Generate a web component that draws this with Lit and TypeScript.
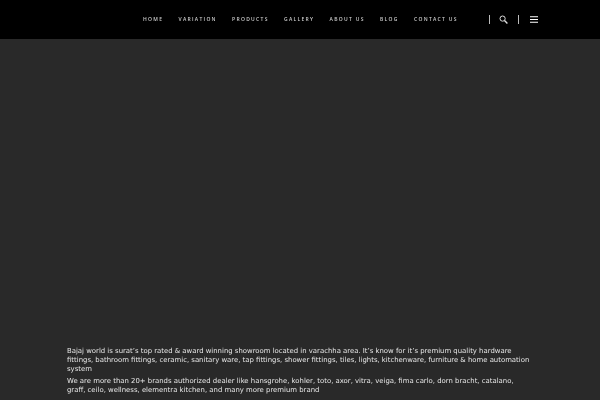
import { LitElement, html, css } from "lit";
import { customElement } from "lit/decorators.js";

const NAV = ["HOME", "VARIATION", "PRODUCTS", "GALLERY", "ABOUT US", "BLOG", "CONTACT US"];

@customElement("app-root")
export class AppRoot extends LitElement {
  static styles = css`
    :host { display: block; width: 600px; height: 400px; overflow: hidden; background: #292929; }
    .bar { height: 39px; background: #000; display: flex; align-items: center; padding-left: 143px; }
    .nav { display: flex; gap: 15.2px; width: 346px; font: 600 5px/1 "Open Sans", sans-serif; letter-spacing: 1.3px; color: #ccc; white-space: nowrap; filter: blur(0.2px); }
    .tools { display: flex; align-items: center; }
    .sep { width: 1px; height: 9px; background: #bbb; }
    .search { width: 28px; padding-right: 2px; box-sizing: border-box; display: flex; justify-content: center; }
    svg { display: block; }
    .menu { margin-left: 11px; }
    .copy { width: 466px; padding: 308px 0 0 67px; font: 6.9px/8.8px "DejaVu Sans", sans-serif; color: #e6e6e6; display: flex; flex-direction: column; gap: 4px; filter: blur(0.2px); }
    p { margin: 0; }
  `;
  render() {
    return html`
      <div class="bar">
        <div class="nav">${NAV.map((n) => html`<span>${n}</span>`)}</div>
        <div class="tools">
          <span class="sep"></span>
          <span class="search"><svg width="9" height="9" viewBox="0 0 9 9" fill="none" stroke="#ddd"><circle cx="3.6" cy="3.6" r="2.6" stroke-width="1"/><path d="M5.5 5.5L8.4 8.4" stroke-width="1.4"/></svg></span>
          <span class="sep"></span>
          <svg class="menu" width="8" height="7" viewBox="0 0 8 7" fill="none" stroke="#fff" stroke-width="1.1"><path d="M0 .7H8M0 3.5H8M0 6.3H8"/></svg>
        </div>
      </div>
      <div class="copy">
        <p>Bajaj world is surat’s top rated &amp; award winning showroom located in varachha area. It’s know for it’s premium quality hardware fittings, bathroom fittings, ceramic, sanitary ware, tap fittings, shower fittings, tiles, lights, kitchenware, furniture &amp; home automation system</p>
        <p>We are more than 20+ brands authorized dealer like hansgrohe, kohler, toto, axor, vitra, veiga, fima carlo, dorn bracht, catalano, graff, ceilo, wellness, elementra kitchen, and many more premium brand</p>
      </div>
    `;
  }
}
